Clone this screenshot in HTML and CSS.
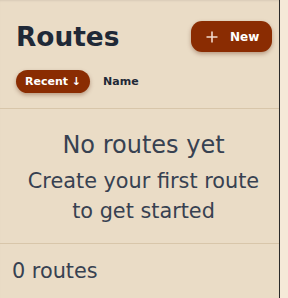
FILE: index.html
```html
<!DOCTYPE html>
<html>
<head>
<meta charset="utf-8">
<link rel="stylesheet" href="styles.css">
</head>
<body>
<div class="app">
  <aside class="sidebar">
    <header class="header">
      <div class="title-row">
        <h1 class="title">Routes</h1>
        <button class="new-btn">
          <svg class="plus" width="12" height="12" viewBox="0 0 12 12"><path d="M6 0.5V11.5M0.5 6H11.5" stroke="currentColor" stroke-width="1.6" fill="none"/></svg>
          <span>New</span>
        </button>
      </div>
      <div class="sort-row">
        <button class="sort active">Recent ↓</button>
        <button class="sort">Name</button>
      </div>
    </header>
    <div class="empty">
      <div class="empty-title">No routes yet</div>
      <div class="empty-text">Create your first route to get started</div>
    </div>
    <footer class="footer">0 routes</footer>
  </aside>
  <main class="main"></main>
</div>
</body>
</html>
```
FILE: styles.css
```css
* { box-sizing: border-box; }
html, body { margin: 0; padding: 0; height: 100%; }
body {
  font-family: "DejaVu Sans", sans-serif;
  background: #f5e9d8;
}
.app {
  display: flex;
  height: 298px;
}
.sidebar {
  width: 280px;
  flex: none;
  background: #eadcc6;
  border-right: 1px solid #2a2a2a;
  display: flex;
  flex-direction: column;
  box-shadow: inset 0 2px 2px -1px rgba(0,0,0,0.08);
}
.main { flex: 1; }
.header {
  padding: 21px 7px 15px 16px;
  border-bottom: 1px solid #d8c6aa;
}
.title-row {
  display: flex;
  align-items: center;
  justify-content: space-between;
}
.title {
  margin: 0;
  font-size: 26.4px;
  font-weight: bold;
  color: #1f2937;
  line-height: 31px;
}
.new-btn {
  display: flex;
  align-items: center;
  gap: 12px;
  height: 31px;
  width: 81px;
  padding: 0 0 0 15px;
  border: none;
  border-radius: 11px;
  background: #8a2c02;
  color: #fff;
  font-family: "DejaVu Sans", sans-serif;
  font-weight: bold;
  font-size: 12px;
  box-shadow: 0 2px 4px rgba(90,30,0,0.35);
}
.plus { color: #f2d9cc; }
.sort-row {
  display: flex;
  align-items: center;
  gap: 4px;
  margin-top: 18px;
}
.sort {
  border: none;
  background: none;
  font-family: "DejaVu Sans", sans-serif;
  font-weight: bold;
  font-size: 11px;
  color: #1f2937;
  height: 23px;
  padding: 0 9px;
  border-radius: 12px;
}
.sort.active {
  background: #8a2c02;
  color: #fff;
  box-shadow: 0 2px 4px rgba(90,30,0,0.35);
}
.empty {
  flex: 1;
  display: flex;
  flex-direction: column;
  align-items: center;
  padding: 19px 12px 0 20px;
  text-align: center;
  color: #374151;
  border-bottom: 1px solid #d8c6aa;
}
.empty-title {
  font-size: 24px;
  line-height: 34px;
}
.empty-text {
  font-size: 20.8px;
  line-height: 30px;
  margin-top: 4px;
}
.footer {
  height: 54px;
  padding: 0 12px;
  display: flex;
  align-items: center;
  font-size: 20.8px;
  color: #374151;
}
```
